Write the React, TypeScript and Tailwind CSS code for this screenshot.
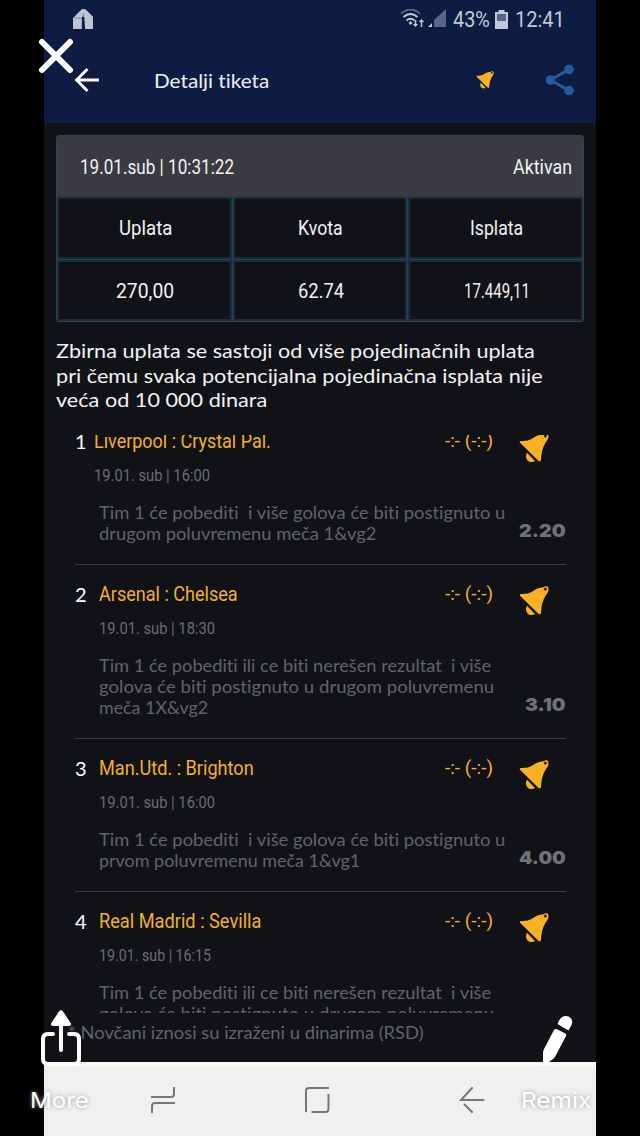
import { useLayoutEffect, useRef, useState } from 'react'
import clsx from 'clsx'

interface Match {
  id: number
  teams: string
  teamsWidth: number
  date: string
  dateWidth: number
  lines: [string, number][]
  odds: string
}

const MATCHES: Match[] = [
  {
    id: 1,
    teams: 'Liverpool : Crystal Pal.',
    teamsWidth: 177,
    date: '19.01. sub | 16:00',
    dateWidth: 116,
    lines: [
      ['Tim 1 će pobediti  i više golova će biti postignuto u', 406],
      ['drugom poluvremenu meča 1&vg2', 277],
    ],
    odds: '2.20',
  },
  {
    id: 2,
    teams: 'Arsenal : Chelsea',
    teamsWidth: 139,
    date: '19.01. sub | 18:30',
    dateWidth: 116,
    lines: [
      ['Tim 1 će pobediti ili ce biti nerešen rezultat  i više', 392],
      ['golova će biti postignuto u drugom poluvremenu', 395],
      ['meča 1X&vg2', 109],
    ],
    odds: '3.10',
  },
  {
    id: 3,
    teams: 'Man.Utd. : Brighton',
    teamsWidth: 155,
    date: '19.01. sub | 16:00',
    dateWidth: 116,
    lines: [
      ['Tim 1 će pobediti  i više golova će biti postignuto u', 406],
      ['prvom poluvremenu meča 1&vg1', 261],
    ],
    odds: '4.00',
  },
  {
    id: 4,
    teams: 'Real Madrid : Sevilla',
    teamsWidth: 162,
    date: '19.01. sub | 16:15',
    dateWidth: 112,
    lines: [
      ['Tim 1 će pobediti ili ce biti nerešen rezultat  i više', 392],
      ['golova će biti postignuto u drugom poluvremenu', 395],
      ['meča 1X&vg2', 109],
    ],
    odds: '3.60',
  },
]

const SUMMARY: [string, number][] = [
  ['Uplata', 53],
  ['Kvota', 45],
  ['Isplata', 53],
  ['270,00', 58],
  ['62.74', 46],
  ['17.449,11', 66],
]

const NOTE: [string, number][] = [
  ['Zbirna uplata se sastoji od više pojedinačnih uplata', 479],
  ['pri čemu svaka potencijalna pojedinačna isplata nije', 487],
  ['veća od 10 000 dinara', 211],
]

// Condenses or widens one line of text so that it fills the given width
function Fit({ text, width, className }: { text: string; width: number; className?: string }) {
  const ref = useRef<HTMLSpanElement>(null)
  const [scale, setScale] = useState(1)

  useLayoutEffect(() => {
    if (ref.current) setScale(width / ref.current.offsetWidth)
  }, [width, text])

  return (
    <span className={clsx('block shrink-0', className)} style={{ width }}>
      <span
        ref={ref}
        className="inline-block origin-left whitespace-pre"
        style={{ transform: `scaleX(${scale})` }}
      >
        {text}
      </span>
    </span>
  )
}

function Bell({ className }: { className?: string }) {
  return (
    <svg viewBox="0 0 90 90" className={className} fill="#f8b124">
      <path d="M3 29Q0 23 8 24C28 25 37 19 46 13C56 6 66 5 73 4Q78 0 84 1Q90 3 88 15C87 20 82 25 78 32C70 46 68 58 66 80Q65 88 58 83Z" />
      <path d="M24 59L48 84C40 89 29 88 24 80C20 73 20 66 24 59Z" />
      <circle cx="79" cy="9" r="4.500" fill="#2b2417" />
    </svg>
  )
}

function StatusBar() {
  return (
    <div className="flex h-[38px] items-center pl-[29px] font-[Roboto] text-[22px] text-[#c3c8d8]">
      <svg width="20" height="20" viewBox="0 0 20 20">
        <path d="M0 9L9 0h3l8 8v12h-8V8H9v12H0Z" fill="#bfc4d5" />
        <path d="M1 9h8l2-5v4H9v12" fill="none" stroke="#7f88a5" strokeWidth="1" />
        <path d="M9 8h3v12H9Z" fill="#0e1c43" />
        <path d="M11 1h2l7 7v12h-8Z" fill="#bfc4d5" />
      </svg>
      <svg width="47" height="20" viewBox="0 0 47 20" className="ml-[307px] mr-[6px]">
        <g fill="none" strokeWidth="1.8">
          <path d="M1 4.5Q10.500-3.500 20 4.500" stroke="#59658a" />
          <path d="M3.500 8Q10.500 2 17.500 8M6.500 11.500Q10.500 8 14.500 11.500" stroke="#c3c8d8" />
          <path d="M15.500 11v6M21.500 12v6" stroke="#c3c8d8" strokeWidth="1.500" />
        </g>
        <path d="M10.500 12l2 2-2 2-2-2ZM12.800 15h5.400l-2.700 3ZM18.800 13h5.400l-2.700-3Z" fill="#c3c8d8" />
        <path d="M46 0v18H34V11Z" fill="#59658a" />
        <path d="M28 18l4-4v4Z" fill="#c3c8d8" />
      </svg>
      <Fit text="43%" width={37} />
      <svg width="13" height="19" viewBox="0 0 13 19" className="ml-[5px] mr-[6px]">
        <path d="M3.500 0h6v2H13v17H0V2h3.500Z" fill="#c3c8d8" />
        <path d="M2 4h9v7H2Z" fill="#59658a" />
      </svg>
      <Fit text="12:41" width={50} className="ml-px" />
    </div>
  )
}

function Header() {
  return (
    <header className="h-[123px] shrink-0 bg-[#0e1c43]">
      <StatusBar />
      <div className="flex h-[83px] items-center">
        <svg
          width="26"
          height="26"
          viewBox="0 0 26 26"
          className="ml-[30px]"
          fill="none"
          stroke="#fff"
          strokeWidth="2.800"
        >
          <path d="M25 13H3M13.500 2L2.500 13L13.500 24" />
        </svg>
        <Fit text="Detalji tiketa" width={115} className="ml-[54px] pt-px font-[Lato] text-[20px] text-[#eef0f5]" />
        <Bell className="ml-[207px] size-[18px]" />
        <svg width="30" height="32" viewBox="0 0 30 32" className="ml-[51px]" fill="#245a9f">
          <path d="M24 5.500L5.500 16L24 26.500" fill="none" stroke="#245a9f" strokeWidth="3" />
          <circle cx="5.500" cy="16" r="4.800" />
          <circle cx="24" cy="5.500" r="4.800" />
          <circle cx="24" cy="26.500" r="4.800" />
        </svg>
      </div>
    </header>
  )
}

function Ticket() {
  return (
    <section className="mx-3 mt-3 h-[187px] shrink-0 overflow-hidden rounded-[3px] border border-[#33444c] bg-[#2b414c] font-[Roboto] text-[20px] text-[#f1f1f3]">
      <div className="flex h-[61px] items-center justify-between bg-[#3a3a42] pl-[23px] pr-[11px]">
        <Fit text="19.01.sub | 10:31:22" width={154} />
        <Fit text="Aktivan" width={59} />
      </div>
      <div className="grid h-[124px] grid-cols-3 grid-rows-2 gap-px">
        {SUMMARY.map(([text, width]) => (
          <div
            key={text}
            className="flex items-center justify-center border-2 border-[#162e3e] bg-[#111217] pl-[2px] pt-px"
          >
            <Fit text={text} width={width} />
          </div>
        ))}
      </div>
    </section>
  )
}

function MatchRow({ match }: { match: Match }) {
  const first = match.id === 1
  return (
    <div className="border-b border-[#3b3c41] pb-[20px] pt-[17px]">
      <div className="flex h-6 items-center">
        <span
          className={clsx(
            'shrink-0 font-[Lato] text-[20px] leading-6 text-white',
            first ? 'w-[19px]' : 'w-6',
          )}
        >
          {match.id}
        </span>
        <Fit
          text={match.teams}
          width={match.teamsWidth}
          className="font-[Roboto] text-[20px] text-[#f2b02c]"
        />
        <Fit
          text="-:- (-:-)"
          width={48}
          className="ml-auto font-[Roboto] text-[19px] text-[#f2b02c]"
        />
        <Bell className="ml-[26px] mr-[17px] mt-[14px] size-[30px] shrink-0" />
      </div>
      <Fit
        text={match.date}
        width={match.dateWidth}
        className={clsx('mt-3 h-5 font-[Roboto] text-[17px] leading-5 text-[#6b6c70]', first ? 'ml-[19px]' : 'ml-6')}
      />
      <div className="mt-[17px] flex items-end justify-between pl-6">
        <div className="w-[410px] font-[Lato] text-[18px] leading-[21px] text-[#626367]">
          {match.lines.map(([text, width]) => (
            <Fit key={text} text={text} width={width} className="h-[21px]" />
          ))}
        </div>
        <Fit
          text={match.odds}
          width={match.odds === '3.10' ? 41 : 47}
          className="mb-[3px] font-[Inter] text-[18px] font-black leading-[21px] text-[#707175]"
        />
      </div>
    </div>
  )
}

function NavBar() {
  return (
    <nav className="flex h-[74px] shrink-0 items-center border-t-4 border-[#f8f8f8] bg-[#f0f0f0] pb-[2px] pl-[106px]">
      <svg width="26" height="28" viewBox="0 0 26 28" fill="none" stroke="#777" strokeWidth="2">
        <path d="M24 1v7q0 3-3 3H1M2 27v-7q0-3 3-3h20" />
      </svg>
      <svg
        width="26"
        height="28"
        viewBox="0 0 26 28"
        className="ml-[128px]"
        fill="none"
        stroke="#777"
        strokeWidth="2"
      >
        <path d="M2 26V5q0-3 3-3h20M24.500 8v15q0 3-3 3H7.500" />
      </svg>
      <svg
        width="26"
        height="28"
        viewBox="0 0 26 28"
        className="ml-[129px]"
        fill="none"
        stroke="#777"
        strokeWidth="2"
        strokeLinecap="round"
      >
        <path d="M24.500 14H2L13 2M5.500 18.500L13 26" />
      </svg>
    </nav>
  )
}

function StoryControls() {
  return (
    <>
      <svg
        width="36"
        height="36"
        viewBox="0 0 36 36"
        className="absolute left-[38px] top-[38px]"
        stroke="#fff"
        strokeWidth="6"
        strokeLinecap="round"
      >
        <path d="M4 4L32 32M32 4L4 32" />
      </svg>
      <svg width="42" height="58" viewBox="0 0 42 58" className="absolute left-[40px] top-[1009px]">
        <path
          d="M13 25H8Q3 25 3 30V50Q3 55 8 55H34Q39 55 39 50V30Q39 25 34 25H29M21 14V41"
          fill="none"
          stroke="#fff"
          strokeWidth="4"
          strokeLinecap="round"
        />
        <path d="M21 1Q22 1 23 2.500L31 14.500Q31.500 17 29 17H13Q10.500 17 11 14.500L19 2.500Q20 1 21 1Z" fill="#fff" />
      </svg>
      <svg width="32" height="54" viewBox="0 0 32 54" className="absolute left-[541px] top-[1013px]" fill="#fff">
        <path d="M16.500 11L18 7.500C23 -1 34 4 30.500 12L27.500 17.500Z" />
        <path d="M13 17Q14 15.500 15.500 16L24.500 20.500Q26 21.500 25 23L14.500 43Q13.500 45 12 46L4 52Q2 53 2 51V40Q2 38 3 36Z" />
      </svg>
      <Fit
        text="More"
        width={59}
        className="absolute left-[30px] top-[1086px] font-[Inter] text-[22px] leading-7 text-white [text-shadow:0_0_4px_#999]"
      />
      <Fit
        text="Remix"
        width={70}
        className="absolute left-[521px] top-[1086px] font-[Inter] text-[22px] leading-7 text-white [text-shadow:0_0_4px_#999]"
      />
    </>
  )
}

export default function App() {
  return (
    <div className="relative h-[1136px] w-[640px] overflow-hidden bg-black px-11 [font-variant-ligatures:none]">
      <div className="flex h-full w-[552px] flex-col bg-[#111217]">
        <Header />
        <Ticket />
        <div className="ml-3 mt-4 h-[97px] shrink-0 font-[Lato] text-[20px] leading-[24.500px] text-[#f3f3f5]">
          {NOTE.map(([text, width]) => (
            <Fit key={text} text={text} width={width} />
          ))}
        </div>
        <main className="h-[578px] shrink-0 overflow-hidden pl-[31px] pr-[30px]">
          <div className="-mt-[23px]">
            {MATCHES.map((match) => (
              <MatchRow key={match.id} match={match} />
            ))}
          </div>
        </main>
        <footer className="flex h-[49px] shrink-0 items-start pl-[24px] pt-[7px] font-[Lato] text-[18px] leading-6 text-[#626367]">
          <Fit text="* Novčani iznosi su izraženi u dinarima (RSD)" width={356} />
        </footer>
        <NavBar />
      </div>
      <StoryControls />
    </div>
  )
}
